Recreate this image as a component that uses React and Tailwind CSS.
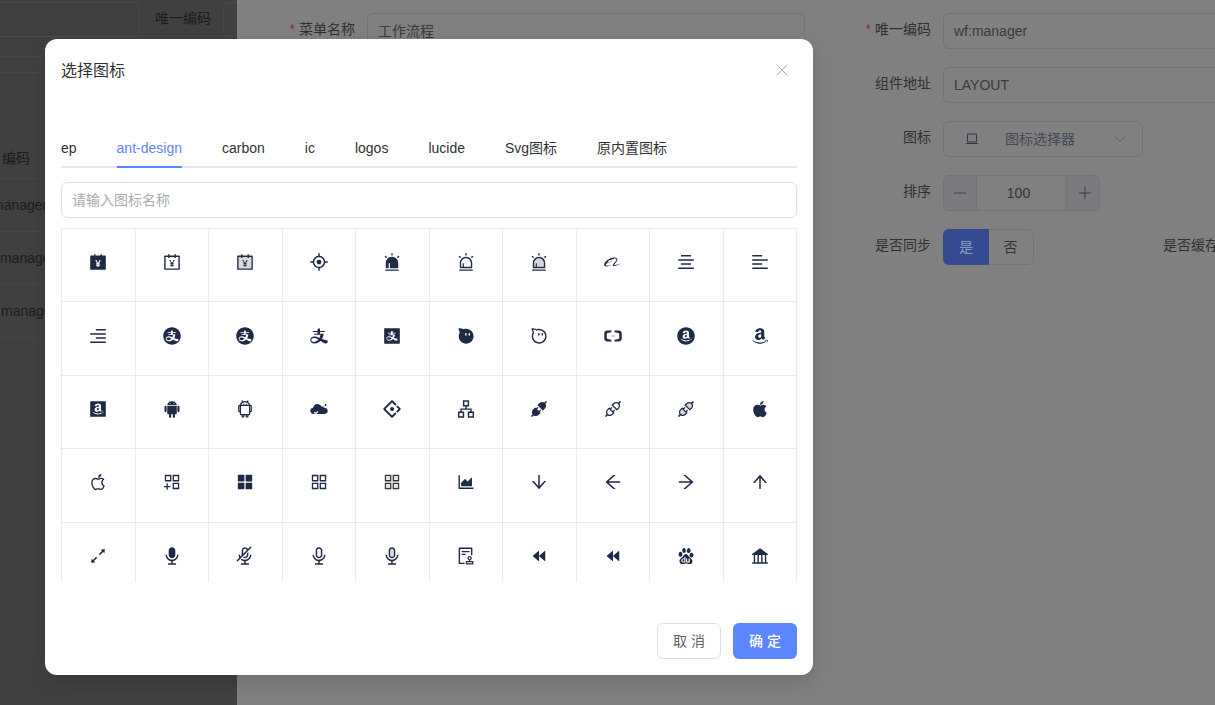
import {
  AiFillAccountBook, AiOutlineAccountBook, AiTwotoneAccountBook, AiOutlineAim, AiFillAlert, AiOutlineAlert, AiTwotoneAlert,
  AiOutlineAlibaba, AiOutlineAlignCenter, AiOutlineAlignLeft, AiOutlineAlignRight, AiFillAlipayCircle, AiOutlineAlipayCircle,
  AiOutlineAlipay, AiFillAlipaySquare, AiFillAliwangwang, AiOutlineAliwangwang, AiOutlineAliyun, AiFillAmazonCircle, AiOutlineAmazon,
  AiFillAmazonSquare, AiFillAndroid, AiOutlineAndroid, AiOutlineAntCloud, AiOutlineAntDesign, AiOutlineApartment, AiFillApi, AiOutlineApi,
  AiTwotoneApi, AiFillApple, AiOutlineApple, AiOutlineAppstoreAdd, AiFillAppstore, AiOutlineAppstore, AiTwotoneAppstore, AiOutlineAreaChart,
  AiOutlineArrowDown, AiOutlineArrowLeft, AiOutlineArrowRight, AiOutlineArrowUp, AiOutlineArrowsAlt, AiFillAudio, AiOutlineAudioMuted,
  AiOutlineAudio, AiTwotoneAudio, AiOutlineAudit, AiFillBackward, AiOutlineBackward, AiOutlineBaidu, AiFillBank,
} from 'react-icons/ai';
import { X, ChevronDown, Minus, Plus } from 'lucide-react';

const ICONS = [
  AiFillAccountBook, AiOutlineAccountBook, AiTwotoneAccountBook, AiOutlineAim, AiFillAlert, AiOutlineAlert, AiTwotoneAlert,
  AiOutlineAlibaba, AiOutlineAlignCenter, AiOutlineAlignLeft, AiOutlineAlignRight, AiFillAlipayCircle, AiOutlineAlipayCircle,
  AiOutlineAlipay, AiFillAlipaySquare, AiFillAliwangwang, AiOutlineAliwangwang, AiOutlineAliyun, AiFillAmazonCircle, AiOutlineAmazon,
  AiFillAmazonSquare, AiFillAndroid, AiOutlineAndroid, AiOutlineAntCloud, AiOutlineAntDesign, AiOutlineApartment, AiFillApi, AiOutlineApi,
  AiTwotoneApi, AiFillApple, AiOutlineApple, AiOutlineAppstoreAdd, AiFillAppstore, AiOutlineAppstore, AiTwotoneAppstore, AiOutlineAreaChart,
  AiOutlineArrowDown, AiOutlineArrowLeft, AiOutlineArrowRight, AiOutlineArrowUp, AiOutlineArrowsAlt, AiFillAudio, AiOutlineAudioMuted,
  AiOutlineAudio, AiTwotoneAudio, AiOutlineAudit, AiFillBackward, AiOutlineBackward, AiOutlineBaidu, AiFillBank,
];

const TABS = ['ep', 'ant-design', 'carbon', 'ic', 'logos', 'lucide', 'Svg图标', '原内置图标'];

function FormRow({ label, required, children, className = '', labelClass = 'w-[130px]' }) {
  return (
    <div className={`flex items-center h-9 ${className}`}>
      <span className={`${labelClass} shrink-0 pr-3 text-right text-sm text-[#303030] -mt-1`}>
        {required && <span className="text-[#8a2f2f] mr-1">*</span>}
        {label}
      </span>
      {children}
    </div>
  );
}

function Field({ value }) {
  return (
    <div className="flex-1 h-9 flex items-center px-[10px] rounded-md border border-[#737373] text-sm text-[#3a3a3a]">{value}</div>
  );
}

function Backdrop() {
  return (
    <div className="h-full flex">
      {/* darker list page behind the drawer */}
      <div className="w-[237px] h-full shrink-0 bg-[#404040] overflow-hidden text-sm text-[#1c1c1c]">
        <div className="h-[56px] flex items-start -ml-[20px] pt-[2px]">
          <div className="w-[160px] h-[35px] shrink-0 rounded-md border border-[#4a4a4a]" />
          <span className="ml-[15px] mt-[6px] whitespace-nowrap">唯一编码</span>
          <div className="ml-[12px] w-[40px] h-[35px] shrink-0 rounded-md border border-[#4a4a4a]" />
        </div>
        <div className="h-[16px] border-t border-[#464646]" />
        <div className="h-[106px] border-t border-[#464646] flex items-end pb-[10px] pl-[2px]">编码</div>
        <div className="h-[53px] border-t border-[#464646] flex items-center -ml-[8px]">manager</div>
        <div className="h-[53px] border-t border-[#464646] flex items-center">manager</div>
        <div className="h-[53px] border-t border-[#464646] flex items-center pl-px">manager</div>
        <div className="border-t border-[#464646]" />
      </div>
      {/* edit form, dimmed */}
      <div className="flex-1 bg-[#808080] pt-[13px] text-sm min-w-0 overflow-hidden">
        <div className="flex">
          <FormRow required label="菜单名称" className="w-[568px] shrink-0"><Field value="工作流程" /></FormRow>
          <FormRow required label="唯一编码" labelClass="w-[118px]" className="w-[440px] shrink-0 ml-5"><Field value="wf:manager" /></FormRow>
        </div>
        <div className="ml-[588px] mt-[18px] w-[440px] flex flex-col gap-[18px]">
          <FormRow label="组件地址" labelClass="w-[118px]"><Field value="LAYOUT" /></FormRow>
          <FormRow label="图标" labelClass="w-[118px]">
            <div className="w-[200px] h-9 rounded-md border border-[#737373] flex items-center pl-[21px] pr-3 text-[#454a58]">
              <svg viewBox="0 0 14 14" className="w-[14px] h-[14px] mr-[26px]" fill="none" stroke="#33374a" strokeWidth="1">
                <path d="M2.5 2h9v8h-9zM1 11.5h12" />
              </svg>
              <span className="flex-1 -mt-px">图标选择器</span>
              <ChevronDown size={20} strokeWidth={1} className="text-[#555a68]" />
            </div>
          </FormRow>
          <FormRow label="排序" labelClass="w-[118px]">
            <div className="w-[157px] h-9 rounded-md border border-[#737373] flex items-center text-[#333]">
              <div className="w-[33px] h-full bg-[#797b7f] rounded-l-md border-r border-[#737373] flex items-center justify-center">
                <Minus size={20} strokeWidth={1} />
              </div>
              <div className="flex-1 text-center pr-[6px]">100</div>
              <div className="w-[33px] h-full bg-[#797b7f] rounded-r-md border-l border-[#737373] flex items-center justify-center pl-[3px]">
                <Plus size={20} strokeWidth={1} />
              </div>
            </div>
          </FormRow>
          <div className="flex h-9">
            <FormRow label="是否同步" labelClass="w-[118px]" className="w-[338px] shrink-0">
              <div className="flex h-9 w-[91px] rounded-md border border-[#737373]">
                <div className="w-[46px] -m-px h-9 rounded-l-md bg-[#344a91] text-[#8f9bc4] flex items-center justify-center">是</div>
                <div className="flex-1 flex items-center justify-center text-[#333]">否</div>
              </div>
            </FormRow>
            <span className="pt-[6px] whitespace-nowrap text-[#303030]">是否缓存</span>
          </div>
        </div>
      </div>
    </div>
  );
}

function IconDialog() {
  return (
    <div className="absolute left-[45px] top-[39px] w-[768px] h-[636px] bg-white rounded-xl px-4 flex flex-col shadow-[0_8px_20px_rgba(0,0,0,0.12)]">
      <div className="h-[62px] flex items-center justify-between">
        <span className="text-base text-[#303133] pt-px">选择图标</span>
        <X size={20} strokeWidth={1} className="text-[#8f97ad] mr-[5px]" />
      </div>
      <div className="mt-[27px] h-[40px] flex gap-10 border-b-2 border-[#e4e7ed] text-sm text-[#303133] pt-[10px]">
        {TABS.map(tab => (
          <div
            key={tab}
            className={tab === 'ant-design'
              ? 'h-[30px] border-b-2 border-[#5c86ff] text-[#5c86ff]'
              : 'h-[30px]'}
          >
            {tab}
          </div>
        ))}
      </div>
      <div className="mt-[14px] h-9 flex items-center px-[10px] rounded-md border border-[#dcdfe6] text-sm text-[#a8abb2]">
        请输入图标名称
      </div>
      <div className="mt-[10px] h-[354px] overflow-hidden">
        <div className="grid grid-cols-10 auto-rows-[73.4px] border-t border-l border-[#e9e9ef]">
          {ICONS.map((Icon, i) => (
            <div key={i} className="border-r border-b border-[#e9e9ef] flex items-center justify-center pb-[6px] text-[#1f2a44]">
              <Icon size={20} />
            </div>
          ))}
        </div>
      </div>
      <div className="mt-[41px] flex justify-end gap-3 text-sm">
        <div className="w-[64px] h-9 rounded-md border border-[#dcdfe6] flex items-center justify-center text-[#606266]">取 消</div>
        <div className="w-[64px] h-9 rounded-md bg-[#5c86ff] flex items-center justify-center font-medium text-white">确 定</div>
      </div>
    </div>
  );
}

export default function App() {
  return (
    <div
      className="relative w-[1215px] h-[705px] overflow-hidden"
      style={{ fontFamily: 'Arial, "Liberation Sans", "Noto Sans CJK SC", sans-serif' }}
    >
      <Backdrop />
      <IconDialog />
    </div>
  );
}
